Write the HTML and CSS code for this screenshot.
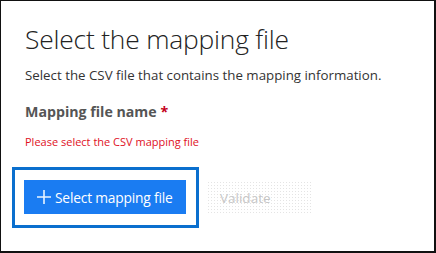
FILE: index.html
```html
<!DOCTYPE html>
<html>
<head>
<meta charset="utf-8">
<link rel="stylesheet" href="styles.css">
</head>
<body>
<div class="frame">
  <h1 class="title">Select the mapping file</h1>
  <p class="desc">Select the CSV file that contains the mapping information.</p>
  <div class="label">Mapping file name <span class="req">*</span></div>
  <div class="error">Please select the CSV mapping file</div>
  <div class="actions">
    <div class="focus">
      <button class="primary"><svg class="plus" width="14" height="14" viewBox="0 0 14 14"><path d="M7 0v14M0 7h14" stroke="#e8f4ff" stroke-width="1.6" fill="none"/></svg>Select mapping file</button>
    </div>
    <button class="disabled">Validate</button>
  </div>
</div>
</body>
</html>
```
FILE: styles.css
```css
html, body { margin: 0; padding: 0; background: #fff; }
body { width: 436px; height: 253px; overflow: hidden; }
.frame {
  box-sizing: border-box;
  width: 436px;
  height: 253px;
  border-left: 1px solid #111;
  border-top: 1px solid #111;
  border-right: 2px solid #111;
  border-bottom: 2px solid #111;
  padding: 21px 0 0 24px;
  font-family: "Open Sans", "Liberation Sans", sans-serif;
}
.title {
  margin: 0;
  font-weight: 300;
  font-size: 26.4px;
  line-height: 34px;
  color: #222;
  letter-spacing: -0.2px;
}
.desc {
  margin: 10px 0 0;
  font-size: 13.3px;
  line-height: 18px;
  color: #333;
}
.label {
  margin-top: 18px;
  font-size: 14.2px;
  font-weight: 700;
  color: #555;
  line-height: 20px;
}
.req { color: #c4001a; }
.error {
  margin-top: 12px;
  font-size: 11px;
  line-height: 16px;
  color: #e0101e;
}
.actions {
  display: flex;
  align-items: center;
  margin-top: 17px;
  margin-left: -13px;
}
.focus {
  border: 3px solid #0a6fce;
  padding: 10px 10px 11px 9px;
}
.primary {
  display: flex;
  align-items: center;
  gap: 4px;
  width: 162px;
  height: 34px;
  border: none;
  background: #1a7cf2;
  color: #fff;
  font-family: "Open Sans", "Liberation Sans", sans-serif;
  font-size: 13.8px;
  letter-spacing: -0.2px;
  padding: 0 0 0 13px;
}
.plus { flex: none; }
.disabled {
  margin-left: 8px;
  width: 104px;
  height: 34px;
  border: none;
  background-color: #fff;
  background-image: radial-gradient(#e4e4e4 0.6px, transparent 0.9px);
  background-size: 3px 3px;
  color: #c6c6c6;
  font-family: "Open Sans", "Liberation Sans", sans-serif;
  font-size: 13.5px;
  text-align: left;
  padding: 0 0 0 13px;
}
```
